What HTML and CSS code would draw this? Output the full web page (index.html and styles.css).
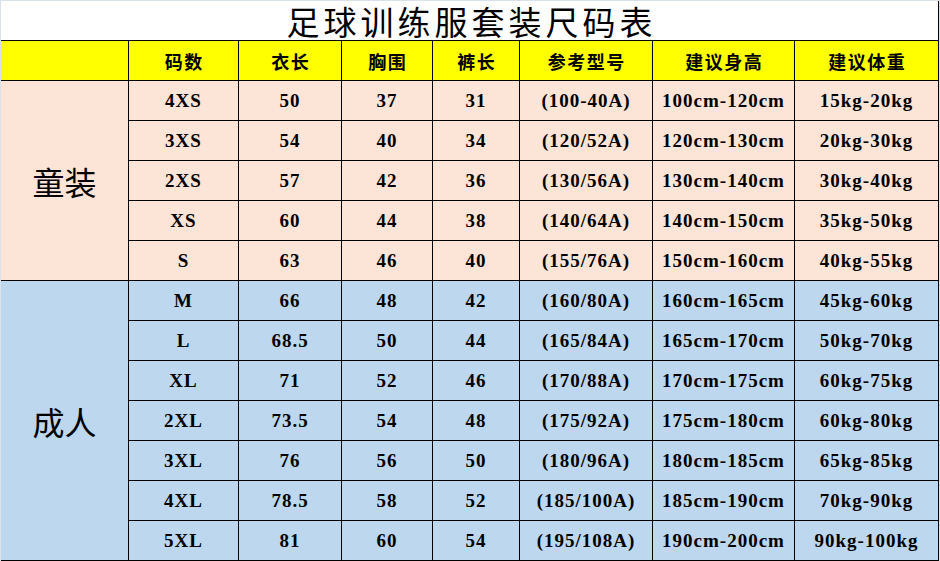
FILE: index.html
```html
<!DOCTYPE html>
<html lang="zh-CN">
<head>
<meta charset="utf-8">
<title>足球训练服套装尺码表</title>
<link rel="stylesheet" href="styles.css">
</head>
<body>
<div class="sheet">
  <div class="title"><span class="title-text">足球训练服套装尺码表</span></div>
  <div class="grid">
    <div class="hd"></div>
    <div class="hd">码数</div>
    <div class="hd">衣长</div>
    <div class="hd">胸围</div>
    <div class="hd">裤长</div>
    <div class="hd">参考型号</div>
    <div class="hd">建议身高</div>
    <div class="hd">建议体重</div>

    <div class="group kid span5">童装</div>
    <div class="c kid">4XS</div><div class="c kid">50</div><div class="c kid">37</div><div class="c kid">31</div><div class="c kid">(100-40A)</div><div class="c kid">100cm-120cm</div><div class="c kid">15kg-20kg</div>
    <div class="c kid">3XS</div><div class="c kid">54</div><div class="c kid">40</div><div class="c kid">34</div><div class="c kid">(120/52A)</div><div class="c kid">120cm-130cm</div><div class="c kid">20kg-30kg</div>
    <div class="c kid">2XS</div><div class="c kid">57</div><div class="c kid">42</div><div class="c kid">36</div><div class="c kid">(130/56A)</div><div class="c kid">130cm-140cm</div><div class="c kid">30kg-40kg</div>
    <div class="c kid">XS</div><div class="c kid">60</div><div class="c kid">44</div><div class="c kid">38</div><div class="c kid">(140/64A)</div><div class="c kid">140cm-150cm</div><div class="c kid">35kg-50kg</div>
    <div class="c kid">S</div><div class="c kid">63</div><div class="c kid">46</div><div class="c kid">40</div><div class="c kid">(155/76A)</div><div class="c kid">150cm-160cm</div><div class="c kid">40kg-55kg</div>

    <div class="group adult span7">成人</div>
    <div class="c adult">M</div><div class="c adult">66</div><div class="c adult">48</div><div class="c adult">42</div><div class="c adult">(160/80A)</div><div class="c adult">160cm-165cm</div><div class="c adult">45kg-60kg</div>
    <div class="c adult">L</div><div class="c adult">68.5</div><div class="c adult">50</div><div class="c adult">44</div><div class="c adult">(165/84A)</div><div class="c adult">165cm-170cm</div><div class="c adult">50kg-70kg</div>
    <div class="c adult">XL</div><div class="c adult">71</div><div class="c adult">52</div><div class="c adult">46</div><div class="c adult">(170/88A)</div><div class="c adult">170cm-175cm</div><div class="c adult">60kg-75kg</div>
    <div class="c adult">2XL</div><div class="c adult">73.5</div><div class="c adult">54</div><div class="c adult">48</div><div class="c adult">(175/92A)</div><div class="c adult">175cm-180cm</div><div class="c adult">60kg-80kg</div>
    <div class="c adult">3XL</div><div class="c adult">76</div><div class="c adult">56</div><div class="c adult">50</div><div class="c adult">(180/96A)</div><div class="c adult">180cm-185cm</div><div class="c adult">65kg-85kg</div>
    <div class="c adult">4XL</div><div class="c adult">78.5</div><div class="c adult">58</div><div class="c adult">52</div><div class="c adult">(185/100A)</div><div class="c adult">185cm-190cm</div><div class="c adult">70kg-90kg</div>
    <div class="c adult">5XL</div><div class="c adult">81</div><div class="c adult">60</div><div class="c adult">54</div><div class="c adult">(195/108A)</div><div class="c adult">190cm-200cm</div><div class="c adult">90kg-100kg</div>
  </div>
</div>
</body>
</html>
```
FILE: styles.css
```css
html, body {
  margin: 0;
  padding: 0;
  background: #ffffff;
}

.sheet {
  width: 938px;
  border-top: 1px solid #d9e1ec;
  border-left: 1px solid #d9e1ec;
  border-right: 1px solid #d9e1ec;
  font-family: "Liberation Serif", "Noto Sans CJK SC", serif;
  color: #000;
}

.title {
  height: 39px;
  background: #fff;
  border-right: 1px solid #000;
  display: flex;
  align-items: flex-end;
  justify-content: center;
  font-family: "Noto Sans CJK SC", sans-serif;
  font-size: 33px;
  letter-spacing: 4px;
  white-space: nowrap;
}

.title-text {
  line-height: 38px;
  padding-left: 4px;
}

.grid {
  display: grid;
  grid-template-columns: 127px 109px 102px 90px 86px 132px 141px 143px;
  grid-auto-rows: 39px;
  gap: 1px;
  background: #000;
  padding: 1px 1px 1px 0;
}

.grid > div {
  display: flex;
  align-items: center;
  justify-content: center;
  white-space: nowrap;
}

.hd {
  background: #ffff00;
  font-family: "Noto Sans CJK SC", sans-serif;
  font-weight: 700;
  font-size: 18px;
  letter-spacing: 1.5px;
  text-indent: 1.5px;
}

.c {
  font-size: 19px;
  font-weight: 700;
  letter-spacing: 1px;
  line-height: 39px;
}

.kid { background: #fce4d6; }
.adult { background: #bdd7ee; }

.group {
  font-family: "Noto Sans CJK SC", sans-serif;
  font-size: 32px;
  font-weight: 400;
}

.span5 { grid-row: span 5; }
.span7 { grid-row: span 7; }
```
